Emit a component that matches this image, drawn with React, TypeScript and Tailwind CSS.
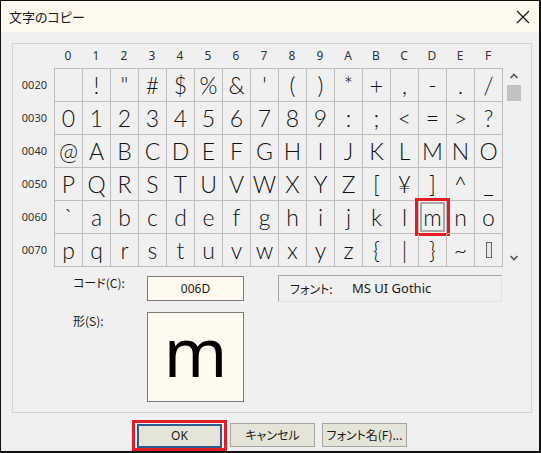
import React from "react";

const ROWS: { code: string; chars: string[] }[] = [
  { code: "0020", chars: [" ", "!", "\"", "#", "$", "%", "&", "'", "(", ")", "*", "+", ",", "-", ".", "/"] },
  { code: "0030", chars: ["0", "1", "2", "3", "4", "5", "6", "7", "8", "9", ":", ";", "<", "=", ">", "?"] },
  { code: "0040", chars: ["@", "A", "B", "C", "D", "E", "F", "G", "H", "I", "J", "K", "L", "M", "N", "O"] },
  { code: "0050", chars: ["P", "Q", "R", "S", "T", "U", "V", "W", "X", "Y", "Z", "[", "¥", "]", "^", "_"] },
  { code: "0060", chars: ["`", "a", "b", "c", "d", "e", "f", "g", "h", "i", "j", "k", "l", "m", "n", "o"] },
  { code: "0070", chars: ["p", "q", "r", "s", "t", "u", "v", "w", "x", "y", "z", "{", "|", "}", "~", "DEL"] },
];

const HEX = ["0", "1", "2", "3", "4", "5", "6", "7", "8", "9", "A", "B", "C", "D", "E", "F"];

// Japanese UI text: proportional kana like Yu Gothic UI
const JP = "font-['Noto_Sans_CJK_JP',sans-serif] [font-feature-settings:'palt']";

export default function App() {
  return (
    <div className="w-[541px] h-[453px] bg-[#f0f0f0] border-t border-l border-r-2 border-b-2 border-[#111] font-['Noto_Sans','Noto_Sans_CJK_JP',sans-serif] text-[12px] text-[#1a1a1a] overflow-hidden">
      {/* Title bar */}
      <div className="h-[31px] bg-[#fdf9ef] flex items-center justify-between pl-[8px] pr-[9px]">
        <span className={`text-[13px] ${JP}`}>文字のコピー</span>
        <svg width="14" height="14" viewBox="0 0 14 14" className="mt-[1px]">
          <path d="M1 1 L13 13 M13 1 L1 13" stroke="#111" strokeWidth="1.1" />
        </svg>
      </div>

      {/* Panel */}
      <div className="ml-[11px] mt-[11px] w-[520px] h-[370px] border border-[#d4d4d4] flex flex-col">
        {/* column headers */}
        <div className="flex h-[24px] pl-[41px] items-center">
          {HEX.map((h) => (
            <div key={h} className="w-[28px] text-center text-[12px] text-[#333]">
              {h}
            </div>
          ))}
        </div>

        <div className="flex">
          {/* row labels */}
          <div className="w-[41px] flex flex-col pt-[1px]">
            {ROWS.map((r) => (
              <div key={r.code} className="h-[33px] flex items-center justify-end pr-[7px] text-[11px] text-[#333]">
                {r.code}
              </div>
            ))}
          </div>

          {/* character grid */}
          <div className="border-t border-l border-[#bdbdbd] font-['Lato',sans-serif] font-light">
            {ROWS.map((r) => (
              <div key={r.code} className="flex">
                {r.chars.map((c, i) => {
                  const selected = r.code === "0060" && c === "m";
                  return (
                    <div
                      key={i}
                      className="relative w-[28px] h-[33px] border-r border-b border-[#bdbdbd] flex items-center justify-center text-[23px] leading-none text-[#111]"
                    >
                      {selected && (
                        <>
                          <div className="absolute inset-[1px] border-2 border-[#a8a8a8]" />
                          <div className="absolute -left-[4px] -right-[4px] -top-[3px] -bottom-[3px] border-[3px] border-[#e31b23]" />
                        </>
                      )}
                      {c === "DEL" ? (
                        <span className="w-[6px] h-[16px] border border-[#666] bg-[#e8e8e8]" />
                      ) : (
                        <span className="relative">{c}</span>
                      )}
                    </div>
                  );
                })}
              </div>
            ))}
          </div>

          {/* scrollbar */}
          <div className="ml-[2px] w-[17px] h-[199px] flex flex-col items-center">
            <svg width="10" height="8" viewBox="0 0 10 8" className="mt-[4px]">
              <path d="M1.5 6 L5 2.5 L8.5 6" stroke="#555" strokeWidth="1.6" fill="none" />
            </svg>
            <div className="mt-[5px] w-[14px] h-[16px] bg-[#c2c2c2]" />
            <div className="flex-1" />
            <svg width="10" height="8" viewBox="0 0 10 8" className="mb-[5px]">
              <path d="M1.5 2 L5 5.5 L8.5 2" stroke="#555" strokeWidth="1.6" fill="none" />
            </svg>
          </div>
        </div>

        {/* code / font row */}
        <div className="flex mt-[9px]">
          <div className={`w-[134px] pl-[60px] text-[12px] leading-none pt-[1px] ${JP}`}>コード(C):</div>
          <div className="w-[97px] h-[25px] border border-[#7a7a7a] bg-[#fffaf0] flex items-center justify-center text-[12px]">
            006D
          </div>
          <div className="ml-[34px] -mt-[1px] w-[224px] h-[27px] border-t border-l border-[#a3a3a3] border-r border-b border-r-[#e2e2e2] border-b-[#e2e2e2] flex items-center text-[12px]">
            <span className={`ml-[11px] w-[62px] ${JP}`}>フォント:</span>
            <span className="text-[13px]">MS UI Gothic</span>
          </div>
        </div>

        {/* shape row */}
        <div className="flex mt-[10px]">
          <div className={`w-[134px] pl-[60px] text-[12px] leading-none pt-[3px] ${JP}`}>形(S):</div>
          <div className="w-[97px] h-[90px] border border-[#7a7a7a] bg-[#fffaf0] flex items-center justify-center">
            <span className="text-[68px] leading-none text-black -mt-[12px]">m</span>
          </div>
        </div>
      </div>

      {/* buttons */}
      <div className="flex items-start mt-[7px] pl-[131px]">
        <div className="w-[95px] h-[31px] border-[3px] border-[#e31b23] flex items-center justify-center">
          <button className="w-[85px] h-[24px] border-2 border-[#2b5d8f] bg-[#e4e4d8] text-[12px]">OK</button>
        </div>
        <button className={`ml-[3px] mt-[3px] w-[85px] h-[24px] border border-[#a4a4a0] bg-[#e4e4d8] text-[12px] whitespace-nowrap ${JP}`}>
          キャンセル
        </button>
        <button className={`ml-[7px] mt-[3px] w-[85px] h-[24px] border border-[#a4a4a0] bg-[#e4e4d8] text-[12px] whitespace-nowrap ${JP}`}>
          フォント名(F)...
        </button>
      </div>
    </div>
  );
}
